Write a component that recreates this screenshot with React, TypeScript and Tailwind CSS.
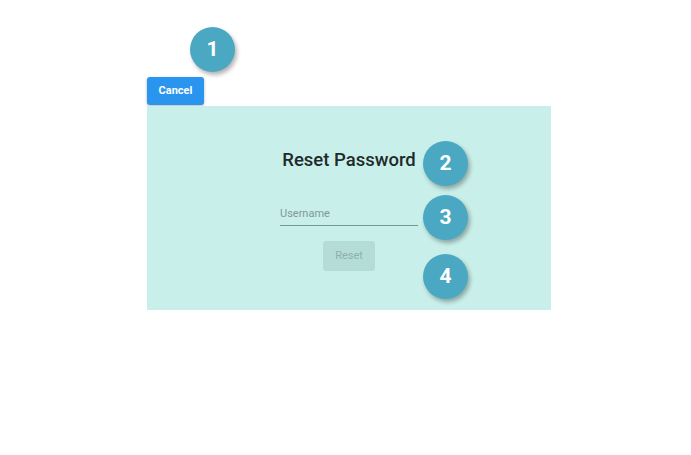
import React from 'react';

const MARKERS = [
  { n: 1, cls: 'left-[190px] top-[27px]' },
  { n: 2, cls: 'left-[423px] top-[141px]' },
  { n: 3, cls: 'left-[423px] top-[195px]' },
  { n: 4, cls: 'left-[423px] top-[254px]' },
];

export default function App() {
  return (
    <div className="relative h-[455px] w-[691px] overflow-hidden bg-white" style={{ fontFamily: 'Roboto, "Liberation Sans", sans-serif' }}>
      <div className="flex flex-col items-start pl-[147px] pt-[77px]">
        <button className="h-[28px] w-[57px] rounded-[3px] bg-[#2a95ef] text-[11px] font-bold text-white shadow-[0_1px_3px_rgba(0,0,0,0.3)]">
          Cancel
        </button>
        <div className="mt-[1px] flex h-[204px] w-[404px] flex-col items-center bg-[#c8efe9] pt-[43px]">
          <h1 className="text-[18.5px] leading-[22px] font-medium text-[#1f2a2a]">Reset Password</h1>
          <div className="mt-[37px] w-[138px] border-b border-[#6f9995] pb-[5px]">
            <span className="block text-[11px] leading-[12px] text-[#7e9a98]">Username</span>
          </div>
          <button className="mt-[15px] h-[30px] w-[52px] rounded-[3px] bg-[#b4ddd8] text-[11px] text-[#8fb0ac]">
            Reset
          </button>
        </div>
      </div>

      {/* numbered callouts */}
      {MARKERS.map((m) => (
        <div
          key={m.n}
          className={`absolute flex h-[45px] w-[45px] items-center justify-center rounded-full bg-[#4aa8c3] text-[21px] font-bold text-white shadow-[2px_3px_4px_rgba(0,0,0,0.3)] ${m.cls}`}
        >
          {m.n}
        </div>
      ))}
    </div>
  );
}
